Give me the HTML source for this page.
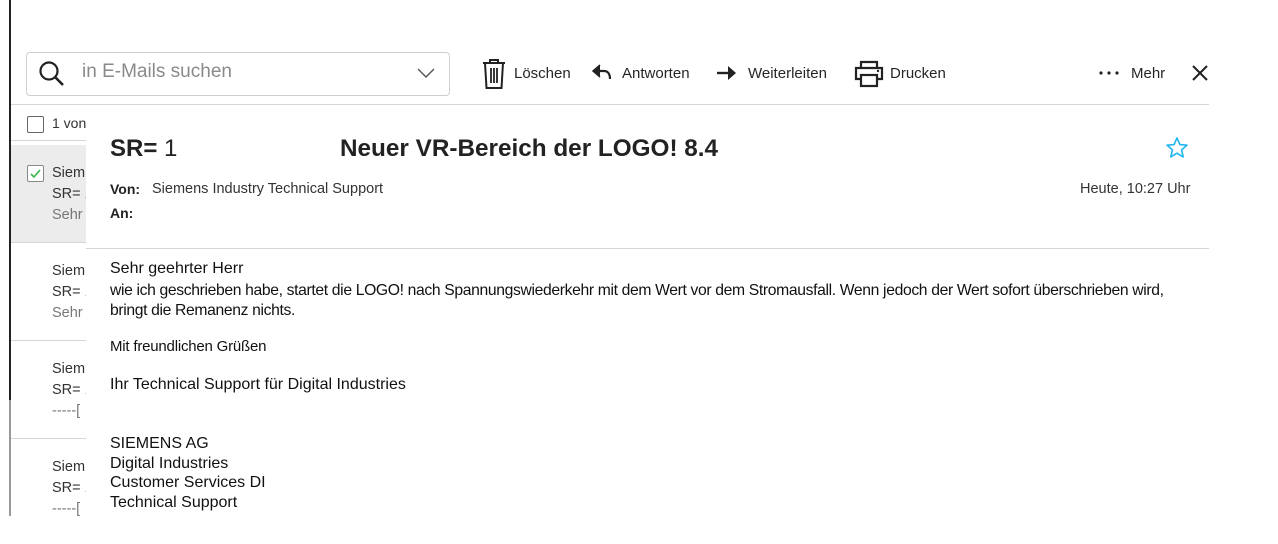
<!DOCTYPE html>
<html><head><meta charset="utf-8"><style>
*{margin:0;padding:0;box-sizing:border-box}
body{width:1278px;height:544px;background:#fff;position:relative;overflow:hidden;font-family:"Liberation Sans",sans-serif;color:#262626}
.a{position:absolute;white-space:nowrap}
.hl{position:absolute;height:1px;background:#d6d6d6}
.tb{font-size:15px;color:#262626}
.list{font-size:14.5px;color:#333}
.g{color:#777}
.body{font-family:"Liberation Sans",sans-serif;color:#111}
</style></head><body>
<div class="a" style="left:9px;top:0;width:2px;height:400px;background:#222"></div>
<div class="a" style="left:9px;top:400px;width:2px;height:116px;background:#999"></div>

<div class="a" style="left:26px;top:52px;width:424px;height:44px;border:1px solid #cfcfcf;border-radius:4px"></div>
<svg class="a" style="left:38px;top:60px" width="28" height="28" viewBox="0 0 28 28"><circle cx="11" cy="11" r="8.5" fill="none" stroke="#222" stroke-width="2.2"/><line x1="17" y1="17" x2="25" y2="25" stroke="#222" stroke-width="2.6"/></svg>
<div class="a" style="left:82px;top:61px;font-size:19px;color:#8a8a8a">in E-Mails suchen</div>
<svg class="a" style="left:417px;top:67px" width="18" height="12"><polyline points="1,2 9,10 17,2" fill="none" stroke="#555" stroke-width="1.4"/></svg>

<svg class="a" style="left:481px;top:58px" width="26" height="32" viewBox="0 0 26 32"><path d="M2 5h22M9 5V2h8v3M4 5l1.5 25h15L22 5" fill="none" stroke="#222" stroke-width="2"/><path d="M10 10v15M13 10v15M16 10v15" stroke="#222" stroke-width="1.8"/></svg>
<div class="a tb" style="left:514px;top:65px">Löschen</div>
<svg class="a" style="left:591px;top:63px" width="22" height="20" viewBox="0 0 22 20"><path d="M9 2L2 8l7 6" fill="#222" stroke="#222" stroke-width="1.5"/><path d="M4 8h9c4 0 6 3 6 8" fill="none" stroke="#222" stroke-width="2.2"/></svg>
<div class="a tb" style="left:622px;top:65px">Antworten</div>
<svg class="a" style="left:716px;top:64px" width="22" height="18" viewBox="0 0 22 18"><path d="M1 9h15" stroke="#222" stroke-width="2.4"/><path d="M12 2l8 7-8 7z" fill="#222"/></svg>
<div class="a tb" style="left:748px;top:65px">Weiterleiten</div>
<svg class="a" style="left:853px;top:60px" width="32" height="28" viewBox="0 0 32 28"><path d="M8 8V2h16v6M8 19H3V8h26v11h-5" fill="none" stroke="#222" stroke-width="2.2"/><rect x="8" y="15" width="16" height="11" fill="none" stroke="#222" stroke-width="2.2"/><circle cx="25" cy="11" r="1.2" fill="#222"/></svg>
<div class="a tb" style="left:890px;top:65px">Drucken</div>
<svg class="a" style="left:1098px;top:70px" width="24" height="6"><circle cx="3" cy="3" r="1.6" fill="#222"/><circle cx="11" cy="3" r="1.6" fill="#222"/><circle cx="19" cy="3" r="1.6" fill="#222"/></svg>
<div class="a tb" style="left:1131px;top:65px">Mehr</div>
<svg class="a" style="left:1191px;top:64px" width="18" height="18"><path d="M2 2l14 14M16 2L2 16" stroke="#222" stroke-width="2"/></svg>

<div class="hl" style="left:11px;top:104px;width:1198px"></div>

<div class="a" style="left:27px;top:116px;width:17px;height:17px;border:1px solid #666;border-radius:2px"></div>
<div class="a list" style="left:52px;top:115px;font-size:14px">1 von</div>
<div class="hl" style="left:11px;top:140px;width:75px"></div>
<div class="a" style="left:11px;top:145px;width:75px;height:97px;background:#ececec"></div>
<div class="a" style="left:27px;top:165px;width:17px;height:17px;border:1px solid #888;border-radius:2px;background:#fff"></div>
<svg class="a" style="left:29px;top:168px" width="13" height="11"><polyline points="2,6 5,9 11,2" fill="none" stroke="#3ab54a" stroke-width="1.6"/></svg>
<div class="a list" style="left:52px;top:163px;line-height:21px">Siem<br>SR= 1<br><span class="g">Sehr</span></div>
<div class="hl" style="left:11px;top:242px;width:75px"></div>
<div class="a list" style="left:52px;top:261px;line-height:21px">Siem<br>SR= 1<br><span class="g">Sehr</span></div>
<div class="hl" style="left:11px;top:340px;width:75px"></div>
<div class="a list" style="left:52px;top:359px;line-height:21px">Siem<br>SR= 1<br><span class="g">-----[</span></div>
<div class="hl" style="left:11px;top:438px;width:75px"></div>
<div class="a list" style="left:52px;top:457px;line-height:21px">Siem<br>SR= 1<br><span class="g">-----[</span></div>

<div class="a" style="left:86px;top:105px;width:1123px;height:439px;background:#fff"></div>
<div class="a" style="left:110px;top:135px;font-size:24px;font-weight:bold;color:#222">SR= <span style="font-weight:normal">1</span></div>
<div class="a" style="left:340px;top:135px;font-size:24.3px;font-weight:bold;color:#222">Neuer VR-Bereich der LOGO! 8.4</div>
<svg class="a" style="left:1165px;top:136px" width="24" height="24" viewBox="0 0 24 24"><path d="M12 2l2.9 6.6 7.1.6-5.4 4.7 1.6 7-6.2-3.7-6.2 3.7 1.6-7L2 9.2l7.1-.6z" fill="none" stroke="#1fb6f0" stroke-width="1.6" stroke-linejoin="round"/></svg>
<div class="a" style="left:110px;top:181px;font-size:14px;font-weight:bold;color:#222">Von:</div>
<div class="a" style="left:152px;top:181px;font-size:14.5px;color:#333">Siemens Industry Technical Support</div>
<div class="a" style="left:1080px;top:181px;font-size:14.5px;color:#333">Heute, 10:27 Uhr</div>
<div class="a" style="left:110px;top:205px;font-size:14px;font-weight:bold;color:#222">An:</div>
<div class="hl" style="left:86px;top:248px;width:1123px"></div>

<div class="a body" style="left:110px;top:260px;font-size:16px">Sehr geehrter Herr</div>
<div class="a body" style="left:110px;top:281px;font-size:15.7px;letter-spacing:-0.35px;line-height:20px">wie ich geschrieben habe, startet die LOGO! nach Spannungswiederkehr mit dem Wert vor dem Stromausfall. Wenn jedoch der Wert sofort überschrieben wird,<br>bringt die Remanenz nichts.</div>
<div class="a body" style="left:110px;top:338px;font-size:15px;letter-spacing:-0.2px">Mit freundlichen Grüßen</div>
<div class="a body" style="left:110px;top:376px;font-size:16px">Ihr Technical Support für Digital Industries</div>
<div class="a body" style="left:110px;top:434px;font-size:16px;line-height:19.5px">SIEMENS AG<br>Digital Industries<br>Customer Services DI<br>Technical Support</div>
</body></html>
